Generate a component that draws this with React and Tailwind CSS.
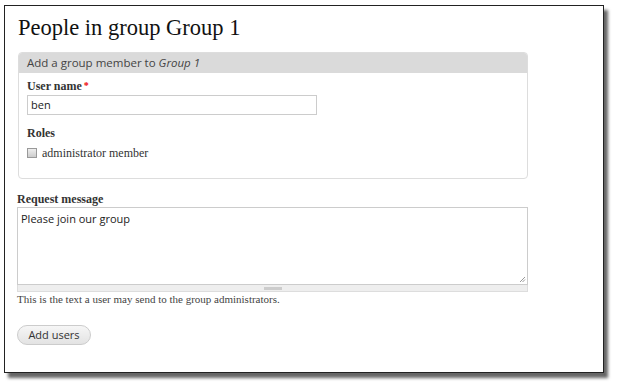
import React from "react";

const serif = { fontFamily: '"Liberation Serif", "DejaVu Serif", serif' };

export default function App() {
  return (
    <div className="w-[620px] h-[390px] bg-white relative overflow-hidden">
      <div className="absolute left-[4px] top-[5px] w-[600px] h-[368px] border border-[#222] bg-white shadow-[4px_5px_3px_rgba(0,0,0,0.6)]" />
      <div className="relative pl-[17px] pt-[13px] w-[530px]">
        <h1
          className="text-[22.5px] leading-[30px] text-[#111] pl-[1px]"
          style={serif}
        >
          People in group Group 1
        </h1>
        <div className="mt-[9px] ml-[1px] w-[510px] border border-[#ddd] rounded-[4px] h-[127px]">
          <div
            className="h-[20px] bg-[#dadada] rounded-t-[3px] pl-[8px] text-[11.5px] leading-[20px] text-[#444]"
            style={{ fontFamily: '"Open Sans", sans-serif' }}
          >
            Add a group member to <i>Group 1</i>
          </div>
          <div className="pl-[8px] pt-[5px]">
            <div className="text-[12px] font-bold leading-[16px] text-[#333]" style={serif}>
              User name<span className="text-[#e00] ml-[2px] text-[10px] align-top">*</span>
            </div>
            <div
              className="mt-[1px] w-[290px] h-[20px] border border-[#ccc] text-[11px] leading-[18px] pl-[3px] text-[#222]"
              style={{ fontFamily: '"Open Sans", sans-serif' }}
            >
              ben
            </div>
            <div className="mt-[10px] text-[12px] font-bold leading-[16px] text-[#333]" style={serif}>
              Roles
            </div>
            <div className="mt-[5px] flex items-center gap-[5px]">
              <div className="w-[10px] h-[10px] border border-[#999] bg-gradient-to-b from-[#eee] to-[#ccc]" />
              <span className="text-[12px] leading-[14px] text-[#333]" style={serif}>
                administrator member
              </span>
            </div>
          </div>
        </div>
        <div className="mt-[12px] text-[12px] font-bold leading-[16px] text-[#333]" style={serif}>
          Request message
        </div>
        <div className="w-[511px]">
          <div
            className="relative h-[78px] border border-[#ccc] text-[11px] leading-[14px] pl-[3px] pt-[4px] text-[#222]"
            style={{ fontFamily: '"Open Sans", sans-serif' }}
          >
            Please join our group
            <svg className="absolute right-[1px] bottom-[1px]" width="7" height="7" viewBox="0 0 7 7">
              <path d="M6 1 L1 6 M6 3.5 L3.5 6" stroke="#999" strokeWidth="1" />
            </svg>
          </div>
          <div className="h-[7px] bg-[#eee] border border-t-0 border-[#ddd] flex justify-center items-center">
            <div className="w-[18px] h-[3px] bg-[#ccc]" />
          </div>
        </div>
        <div className="text-[11px] leading-[14px] text-[#444]" style={serif}>
          This is the text a user may send to the group administrators.
        </div>
        <button
          className="mt-[19px] w-[74px] h-[20px] rounded-full border border-[#ccc] bg-gradient-to-b from-[#f6f6f6] to-[#e3e3e3] text-[11px] text-[#333] leading-[18px]"
          style={{ fontFamily: '"Open Sans", sans-serif' }}
        >
          Add users
        </button>
      </div>
    </div>
  );
}
